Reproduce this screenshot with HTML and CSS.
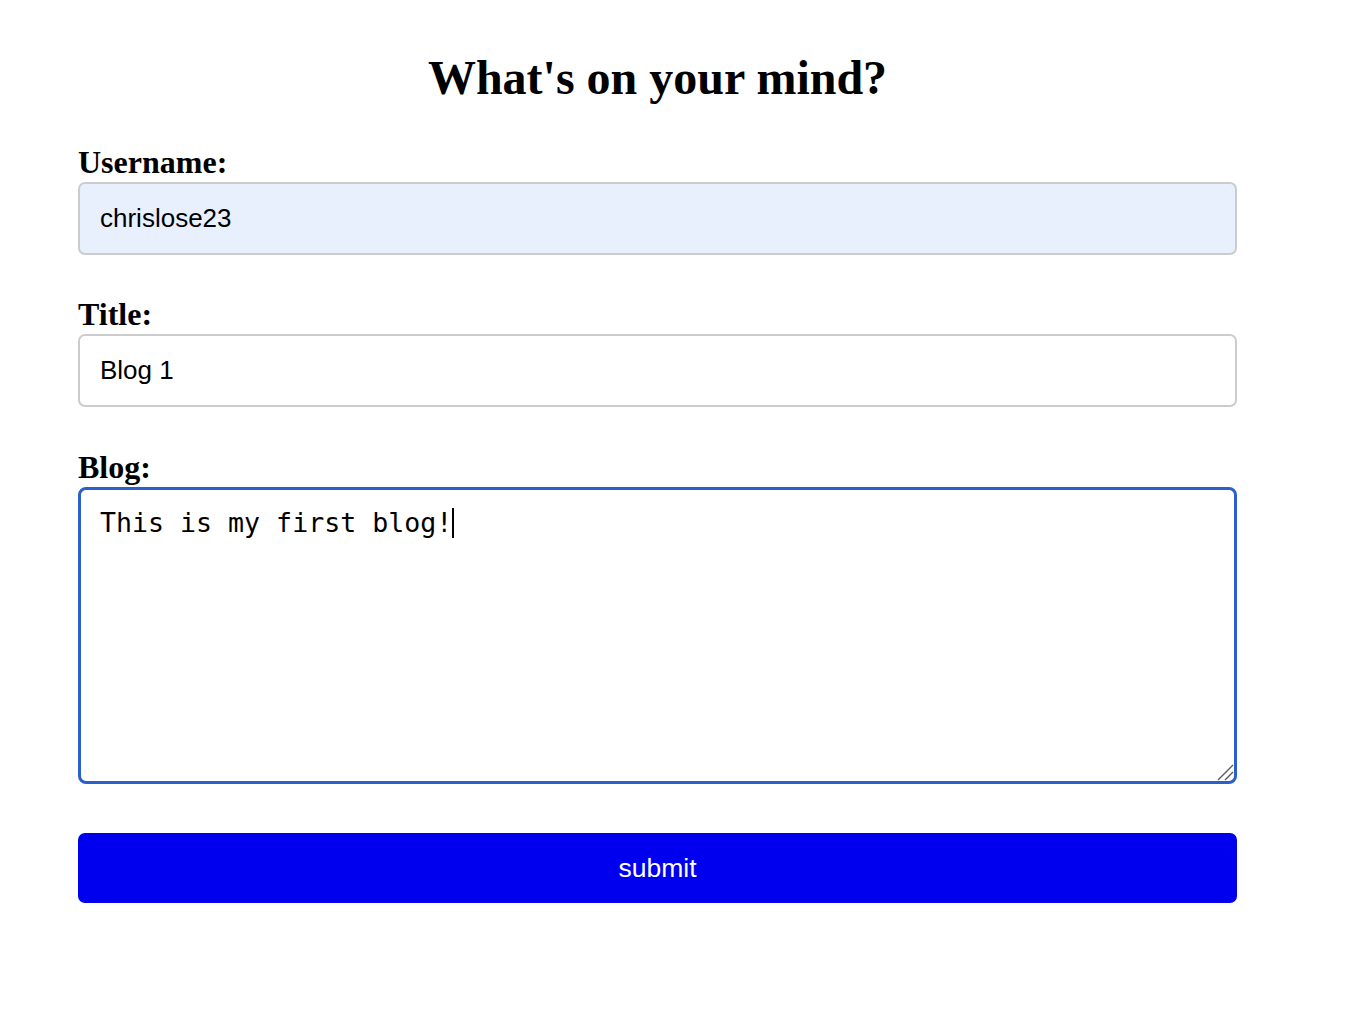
FILE: index.html
```html
<!DOCTYPE html>
<html>
<head>
<meta charset="utf-8">
<link rel="stylesheet" href="styles.css">
</head>
<body>
<div class="page">
  <h1 class="title">What's on your mind?</h1>
  <form class="form">
    <label class="label" for="u">Username:</label>
    <input id="u" class="field field-auto" type="text" value="chrislose23">
    <label class="label" for="t">Title:</label>
    <input id="t" class="field" type="text" value="Blog 1">
    <label class="label" for="b">Blog:</label>
    <div class="area">This is my first blog!<span class="caret"></span><svg class="grip" width="18" height="18" viewBox="0 0 18 18"><path d="M2 17 L17 2 M9 17 L17 9" stroke="#5a5a5a" stroke-width="1.4" fill="none"/></svg></div>
    <button class="submit" type="button">submit</button>
  </form>
</div>
</body>
</html>
```
FILE: styles.css
```css
html, body { margin: 0; padding: 0; background: #fff; }
body { font-family: "Liberation Serif", "Times New Roman", serif; color: #000; }
.page { width: 1159px; margin-left: 78px; padding-top: 50px; }
.title { margin: 0 0 44px 0; text-align: center; font-size: 48px; font-weight: bold; line-height: 56px; }
.form { display: flex; flex-direction: column; }
.label { font-weight: bold; font-size: 32px; line-height: 24px; padding-bottom: 8px; display: block; }
.field { box-sizing: border-box; height: 73px; border: 2px solid #ccc; border-radius: 7px; padding: 0 20px; font-family: "Liberation Sans", Arial, sans-serif; font-size: 26px; color: #000; background: #fff; margin: 0 0 47px 0; outline: none; }
.field-auto { background: #e8f0fe; }
.field + .label + .field { margin-bottom: 48px; }
.area { position: relative; box-sizing: border-box; height: 297px; border: 3px solid #2b5fcc; border-radius: 8px; padding: 15px 19px; font-family: "DejaVu Sans Mono", monospace; font-size: 26.6px; line-height: 36px; margin-bottom: 49px; white-space: pre; }
.caret { display: inline-block; width: 2px; height: 30px; background: #000; vertical-align: -6px; }
.grip { position: absolute; right: 0; bottom: 0; }
.submit { height: 70px; border: 0; border-radius: 7px; background: #0000ee; color: #fff; font-family: "Liberation Sans", Arial, sans-serif; font-size: 26.5px; cursor: pointer; }
```
